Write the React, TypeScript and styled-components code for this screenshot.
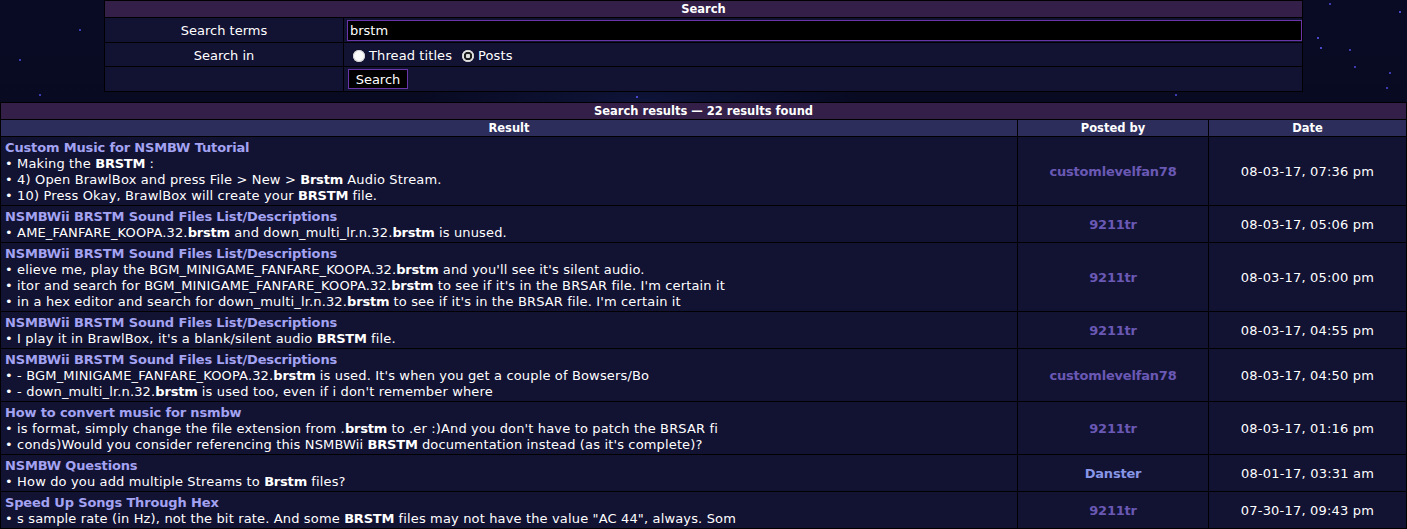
import React from 'react';
import styled, { createGlobalStyle } from 'styled-components';

const Global = createGlobalStyle`
  html, body { margin: 0; padding: 0; }
  body {
    min-height: 529px;
    font-family: "DejaVu Sans", Verdana, sans-serif;
    font-size: 13px;
    color: #ffffff;
    background-color: #07081c;
    background-image:
      radial-gradient(1.5px 1.5px at 1318px 38px, #4a46c8 60%, transparent 100%),
      radial-gradient(1.5px 1.5px at 1350px 50px, #3d3ab0 60%, transparent 100%),
      radial-gradient(1.5px 1.5px at 1321px 48px, #4a46c8 60%, transparent 100%),
      radial-gradient(1.5px 1.5px at 1355px 67px, #3d3ab0 60%, transparent 100%),
      radial-gradient(1.5px 1.5px at 1387px 88px, #3d3ab0 60%, transparent 100%),
      radial-gradient(1.5px 1.5px at 1400px 12px, #4a46c8 60%, transparent 100%),
      radial-gradient(1.5px 1.5px at 1330px 4px, #3d3ab0 60%, transparent 100%),
      radial-gradient(1.5px 1.5px at 1390px 73px, #3d3ab0 60%, transparent 100%),
      radial-gradient(1.5px 1.5px at 40px 95px, #3d3ab0 60%, transparent 100%),
      radial-gradient(1.5px 1.5px at 80px 30px, #3d3ab0 60%, transparent 100%),
      radial-gradient(1.5px 1.5px at 20px 60px, #3d3ab0 60%, transparent 100%),
      radial-gradient(1.5px 1.5px at 637px 97px, #4a46c8 60%, transparent 100%),
      radial-gradient(1.5px 1.5px at 1176px 95px, #3d3ab0 60%, transparent 100%),
      radial-gradient(ellipse 220px 40px at 640px 100px, #0e1438 0%, transparent 100%),
      linear-gradient(180deg, #090b24 0%, #06071a 100%);
  }
`;

const Page = styled.div`
  display: flex;
  flex-direction: column;
  gap: 10px;
`;

const Table = styled.table<{ $w: string }>`
  width: ${p => p.$w};
  margin: 0 auto;
  border-collapse: separate;
  border-spacing: 1px;
  background: #000;
  font-size: 13px;
`;

const Caption = styled.th`
  background: #331f48;
  height: 15px;
  line-height: 15px;
  padding: 1px 0 0 0;
  font-size: 11.5px;
  font-weight: bold;
  text-align: center;
  color: #fff;
`;

const ColHead = styled.th<{ $w?: number }>`
  background: #2d2d5c;
  height: 15px;
  line-height: 15px;
  padding: 1px 0 0 0;
  font-size: 11.5px;
  font-weight: bold;
  text-align: center;
  color: #fff;
  ${p => (p.$w ? `width: ${p.$w}px;` : '')}
`;

const LabelCell = styled.td<{ $h: number; $pt?: number }>`
  width: 238px;
  height: ${p => p.$h - (p.$pt ?? 1)}px;
  padding: ${p => p.$pt ?? 1}px 0 0 0;
  background: #121233;
  text-align: center;
  line-height: 16px;
`;

const FieldCell = styled.td<{ $h: number }>`
  height: ${p => p.$h}px;
  padding: 0 0 0 3px;
  background: #121233;
  line-height: 16px;
  vertical-align: middle;
`;

const TextInput = styled.input`
  display: block;
  box-sizing: border-box;
  width: 100%;
  height: 21px;
  margin: 0;
  padding: 0 2px;
  background: #000;
  border: 1px solid #6b35aa;
  color: #fff;
  font-family: "DejaVu Sans", Verdana, sans-serif;
  font-size: 13px;
  outline: none;
`;

const RadioRow = styled.div`
  display: flex;
  align-items: center;
  padding-left: 6px;
  padding-top: 3px;
`;

const RadioLabel = styled.label`
  display: inline-flex;
  align-items: center;
  gap: 4px;
  margin-right: 10px;
  color: #fff;
  letter-spacing: 0.1px;
`;

const Radio = styled.input`
  appearance: none;
  -webkit-appearance: none;
  width: 12px;
  height: 12px;
  margin: 0;
  border-radius: 50%;
  background: #fafafa;
  box-shadow: inset 0 0 0 1px #cfcfcf;
  &:checked {
    background: radial-gradient(circle, #dcdcdc 0 2px, #1d1d1d 2.5px 4px, #fafafa 4.6px);
  }
`;

const Button = styled.button`
  display: block;
  margin: 0 0 0 1px;
  width: 60px;
  height: 20px;
  padding: 0;
  background: #000;
  border: 1px solid #6b35aa;
  color: #fff;
  font-family: "DejaVu Sans", Verdana, sans-serif;
  font-size: 13px;
`;

const ResultCell = styled.td`
  background: #121233;
  padding: 3px 4px 1px 4px;
  line-height: 16px;
  vertical-align: top;
`;

const CenterCell = styled.td<{ $w?: number }>`
  background: #121233;
  padding: 1px 0 0 0;
  text-align: center;
  vertical-align: middle;
  letter-spacing: 0.2px;
  ${p => (p.$w ? `width: ${p.$w}px;` : '')}
`;

const ThreadTitle = styled.a`
  display: block;
  color: #a3a3f2;
  font-weight: bold;
  letter-spacing: -0.15px;
  text-decoration: none;
`;

const Excerpt = styled.div`
  white-space: nowrap;
  color: #fff;
  letter-spacing: 0.15px;
  b { font-weight: bold; letter-spacing: -0.2px; }
`;

const User = styled.a<{ $staff?: boolean }>`
  color: ${p => (p.$staff ? '#8796e6' : '#6a59b4')};
  font-weight: bold;
  letter-spacing: -0.2px;
  text-decoration: none;
`;

type Row = { title: string; lines: React.ReactNode[]; user: string; staff?: boolean; date: string };

const rows: Row[] = [
  {
    title: 'Custom Music for NSMBW Tutorial',
    lines: [
      <>• Making the <b>BRSTM</b> :</>,
      <>• 4) Open BrawlBox and press File &gt; New &gt; <b>Brstm</b> Audio Stream.</>,
      <>• 10) Press Okay, BrawlBox will create your <b>BRSTM</b> file.</>,
    ],
    user: 'customlevelfan78',
    date: '08-03-17, 07:36 pm',
  },
  {
    title: 'NSMBWii BRSTM Sound Files List/Descriptions',
    lines: [<>• AME_FANFARE_KOOPA.32.<b>brstm</b> and down_multi_lr.n.32.<b>brstm</b> is unused.</>],
    user: '9211tr',
    date: '08-03-17, 05:06 pm',
  },
  {
    title: 'NSMBWii BRSTM Sound Files List/Descriptions',
    lines: [
      <>• elieve me, play the BGM_MINIGAME_FANFARE_KOOPA.32.<b>brstm</b> and you'll see it's silent audio.</>,
      <>• itor and search for BGM_MINIGAME_FANFARE_KOOPA.32.<b>brstm</b> to see if it's in the BRSAR file. I'm certain it</>,
      <>• in a hex editor and search for down_multi_lr.n.32.<b>brstm</b> to see if it's in the BRSAR file. I'm certain it</>,
    ],
    user: '9211tr',
    date: '08-03-17, 05:00 pm',
  },
  {
    title: 'NSMBWii BRSTM Sound Files List/Descriptions',
    lines: [<>• I play it in BrawlBox, it's a blank/silent audio <b>BRSTM</b> file.</>],
    user: '9211tr',
    date: '08-03-17, 04:55 pm',
  },
  {
    title: 'NSMBWii BRSTM Sound Files List/Descriptions',
    lines: [
      <>• - BGM_MINIGAME_FANFARE_KOOPA.32.<b>brstm</b> is used. It's when you get a couple of Bowsers/Bo</>,
      <>• - down_multi_lr.n.32.<b>brstm</b> is used too, even if i don't remember where</>,
    ],
    user: 'customlevelfan78',
    date: '08-03-17, 04:50 pm',
  },
  {
    title: 'How to convert music for nsmbw',
    lines: [
      <>• is format, simply change the file extension from .<b>brstm</b> to .er :)And you don't have to patch the BRSAR fi</>,
      <>• conds)Would you consider referencing this NSMBWii <b>BRSTM</b> documentation instead (as it's complete)?</>,
    ],
    user: '9211tr',
    date: '08-03-17, 01:16 pm',
  },
  {
    title: 'NSMBW Questions',
    lines: [<>• How do you add multiple Streams to <b>Brstm</b> files?</>],
    user: 'Danster',
    staff: true,
    date: '08-01-17, 03:31 am',
  },
  {
    title: 'Speed Up Songs Through Hex',
    lines: [<>• s sample rate (in Hz), not the bit rate. And some <b>BRSTM</b> files may not have the value "AC 44", always. Som</>],
    user: '9211tr',
    date: '07-30-17, 09:43 pm',
  },
];

export default function App() {
  return (
    <>
      <Global />
      <Page>
        <Table $w="1199px">
          <tbody>
            <tr>
              <Caption colSpan={2}>Search</Caption>
            </tr>
            <tr>
              <LabelCell $h={24}>Search terms</LabelCell>
              <FieldCell $h={24}>
                <TextInput type="text" defaultValue="brstm" />
              </FieldCell>
            </tr>
            <tr>
              <LabelCell $h={23} $pt={2}>Search in</LabelCell>
              <FieldCell $h={23}>
                <RadioRow>
                  <RadioLabel>
                    <Radio type="radio" name="in" />
                    Thread titles
                  </RadioLabel>
                  <RadioLabel>
                    <Radio type="radio" name="in" defaultChecked />
                    Posts
                  </RadioLabel>
                </RadioRow>
              </FieldCell>
            </tr>
            <tr>
              <LabelCell $h={24}></LabelCell>
              <FieldCell $h={24}>
                <Button type="button">Search</Button>
              </FieldCell>
            </tr>
          </tbody>
        </Table>

        <Table $w="100%">
          <tbody>
            <tr>
              <Caption colSpan={3}>Search results — 22 results found</Caption>
            </tr>
            <tr>
              <ColHead>Result</ColHead>
              <ColHead $w={190}>Posted by</ColHead>
              <ColHead $w={197}>Date</ColHead>
            </tr>
            {rows.map((r, i) => (
              <tr key={i}>
                <ResultCell>
                  <ThreadTitle href="#">{r.title}</ThreadTitle>
                  {r.lines.map((l, j) => (
                    <Excerpt key={j}>{l}</Excerpt>
                  ))}
                </ResultCell>
                <CenterCell $w={190}>
                  <User href="#" $staff={r.staff}>{r.user}</User>
                </CenterCell>
                <CenterCell $w={197}>{r.date}</CenterCell>
              </tr>
            ))}
          </tbody>
        </Table>
      </Page>
    </>
  );
}
